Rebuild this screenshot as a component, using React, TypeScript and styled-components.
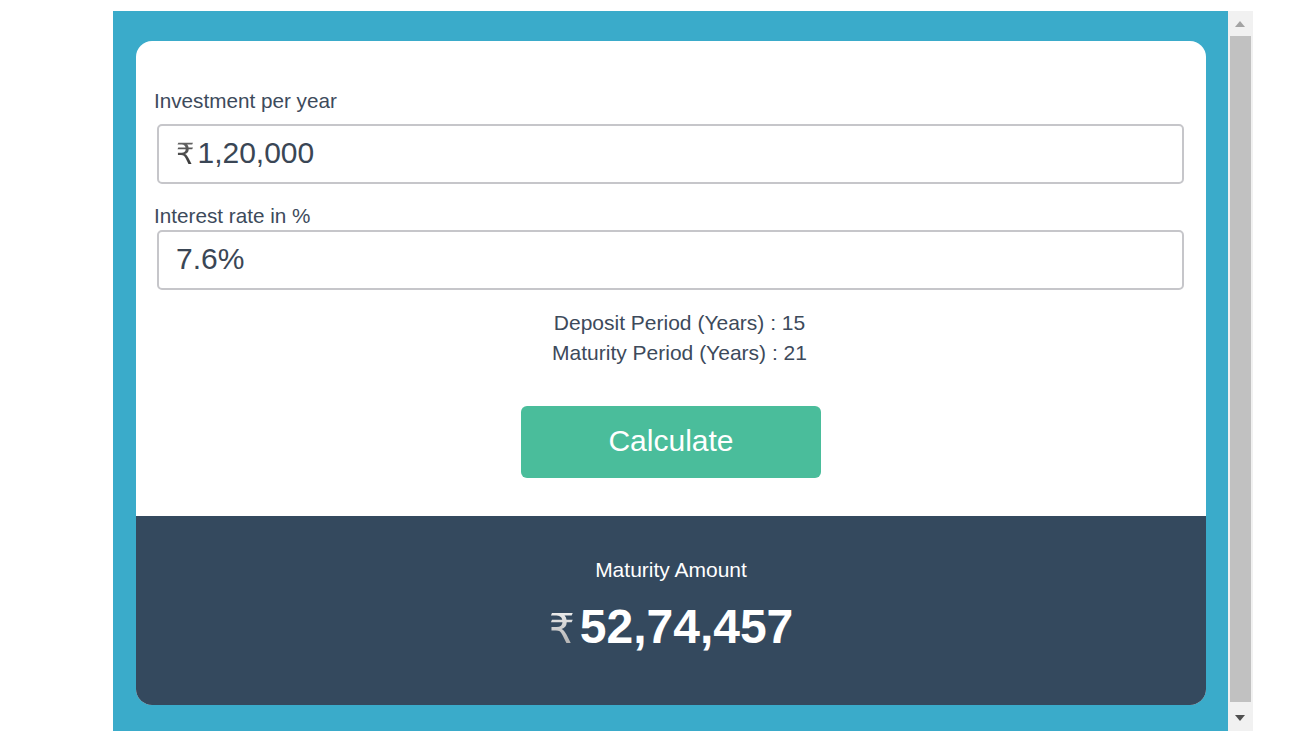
import styled, { createGlobalStyle } from "styled-components";
import { useState } from "react";

const GlobalStyle = createGlobalStyle`
    html, body {
        margin: 0;
        padding: 0;
        background: #ffffff;
        font-family: "Liberation Sans", Arial, sans-serif;
    }
`;

const App = () => {
    const [amount, setAmount] = useState<string>('1,20,000');
    const [rate, setRate] = useState<string>('7.6%');

    return (
        <Page>
            <GlobalStyle />
            <Frame>
                <Panel>
                    <Card>
                        <Form>
                            <Field>
                                <Label gap={11}>Investment per year</Label>
                                <InputBox>
                                    <Rupee>₹</Rupee>
                                    <TextInput
                                        type="text"
                                        value={amount}
                                        onChange={(e) => setAmount(e.target.value)}
                                    />
                                </InputBox>
                            </Field>
                            <Field>
                                <Label gap={2}>Interest rate in %</Label>
                                <InputBox>
                                    <TextInput
                                        type="text"
                                        value={rate}
                                        onChange={(e) => setRate(e.target.value)}
                                    />
                                </InputBox>
                            </Field>
                            <Info>
                                <InfoLine>Deposit Period (Years) : 15</InfoLine>
                                <InfoLine>Maturity Period (Years) : 21</InfoLine>
                            </Info>
                            <CalcButton>Calculate</CalcButton>
                        </Form>
                        <Result>
                            <ResultTitle>Maturity Amount</ResultTitle>
                            <ResultAmount>
                                <BigRupee>₹</BigRupee>
                                <span>52,74,457</span>
                            </ResultAmount>
                        </Result>
                    </Card>
                </Panel>
                <Scrollbar>
                    <ArrowCell>
                        <Arrow up />
                    </ArrowCell>
                    <Thumb />
                    <ArrowCell bottom>
                        <Arrow />
                    </ArrowCell>
                </Scrollbar>
            </Frame>
        </Page>
    );
};

const Page = styled.div`
    padding: 11px 0 0 113px;
`;

const Frame = styled.div`
    display: flex;
    width: 1140px;
    height: 720px;
`;

const Panel = styled.div`
    width: 1115px;
    box-sizing: border-box;
    background: #3aabca;
    padding: 30px 22px 26px 23px;
`;

const Card = styled.div`
    background: #ffffff;
    border-radius: 16px;
    overflow: hidden;
    display: flex;
    flex-direction: column;
    height: 100%;
`;

const Form = styled.div`
    padding: 48px 22px 38px 18px;
    display: flex;
    flex-direction: column;
    gap: 20px;
`;

const Field = styled.div`
    display: flex;
    flex-direction: column;
`;

const Label = styled.label<{ gap: number }>`
    font-size: 20.7px;
    line-height: 24px;
    color: #3d4a5b;
    margin-bottom: ${(p) => p.gap}px;
`;

const InputBox = styled.div`
    margin-left: 3px;
    height: 60px;
    box-sizing: border-box;
    border: 2px solid #c6c6ca;
    border-radius: 5px;
    display: flex;
    align-items: center;
    padding: 0 16px 2px 17px;
`;

const Rupee = styled.span`
    font-family: "DejaVu Sans", "Noto Sans", sans-serif;
    font-size: 29px;
    line-height: 1;
    margin-right: 3px;
    margin-top: 2px;
    background: linear-gradient(180deg, #6a6a6a, #2e2e2e);
    -webkit-background-clip: text;
    background-clip: text;
    color: transparent;
`;

const TextInput = styled.input`
    flex: 1;
    border: none;
    outline: none;
    padding: 0;
    background: transparent;
    font-family: "Liberation Sans", Arial, sans-serif;
    font-size: 30px;
    color: #3a4655;
`;

const Info = styled.div`
    margin-top: -2px;
    padding-left: 21px;
    text-align: center;
`;

const InfoLine = styled.div`
    font-size: 21px;
    line-height: 30px;
    color: #3d4a5b;
`;

const CalcButton = styled.button`
    align-self: center;
    margin-top: 18px;
    margin-left: 4px;
    width: 300px;
    height: 72px;
    border: none;
    border-radius: 6px;
    background: #4abd9b;
    color: #ffffff;
    font-family: "Liberation Sans", Arial, sans-serif;
    font-size: 30px;
    padding-bottom: 3px;
    cursor: pointer;
`;

const Result = styled.div`
    flex: 1;
    background: #34495e;
    display: flex;
    flex-direction: column;
    align-items: center;
    padding-top: 42px;
`;

const ResultTitle = styled.div`
    font-size: 21px;
    line-height: 24px;
    color: #ffffff;
`;

const ResultAmount = styled.div`
    margin-top: 17px;
    display: flex;
    align-items: center;
    gap: 5px;
    font-size: 48px;
    line-height: 56px;
    font-weight: 700;
    color: #ffffff;
`;

const BigRupee = styled.span`
    font-family: "DejaVu Sans", "Noto Sans", sans-serif;
    font-weight: 400;
    font-size: 41px;
    line-height: 1;
    margin-top: 4px;
    background: linear-gradient(180deg, #f2f2f2, #a8a8a8);
    -webkit-background-clip: text;
    background-clip: text;
    color: transparent;
`;

const Scrollbar = styled.div`
    width: 25px;
    background: #f1f1f1;
    display: flex;
    flex-direction: column;
`;

const ArrowCell = styled.div<{ bottom?: boolean }>`
    height: ${(p) => (p.bottom ? 29 : 25)}px;
    display: flex;
    justify-content: center;
    align-items: center;
`;

const Arrow = styled.div<{ up?: boolean }>`
    width: 0;
    height: 0;
    margin-left: -1px;
    border-left: 5.5px solid transparent;
    border-right: 5.5px solid transparent;
    ${(p) =>
        p.up
            ? `border-bottom: 6px solid #a3a3a3; margin-top: 1px;`
            : `border-top: 6px solid #505050; margin-top: 2px;`}
`;

const Thumb = styled.div`
    flex: 1;
    margin: 0 2px;
    background: #c1c1c1;
`;

export default App;
